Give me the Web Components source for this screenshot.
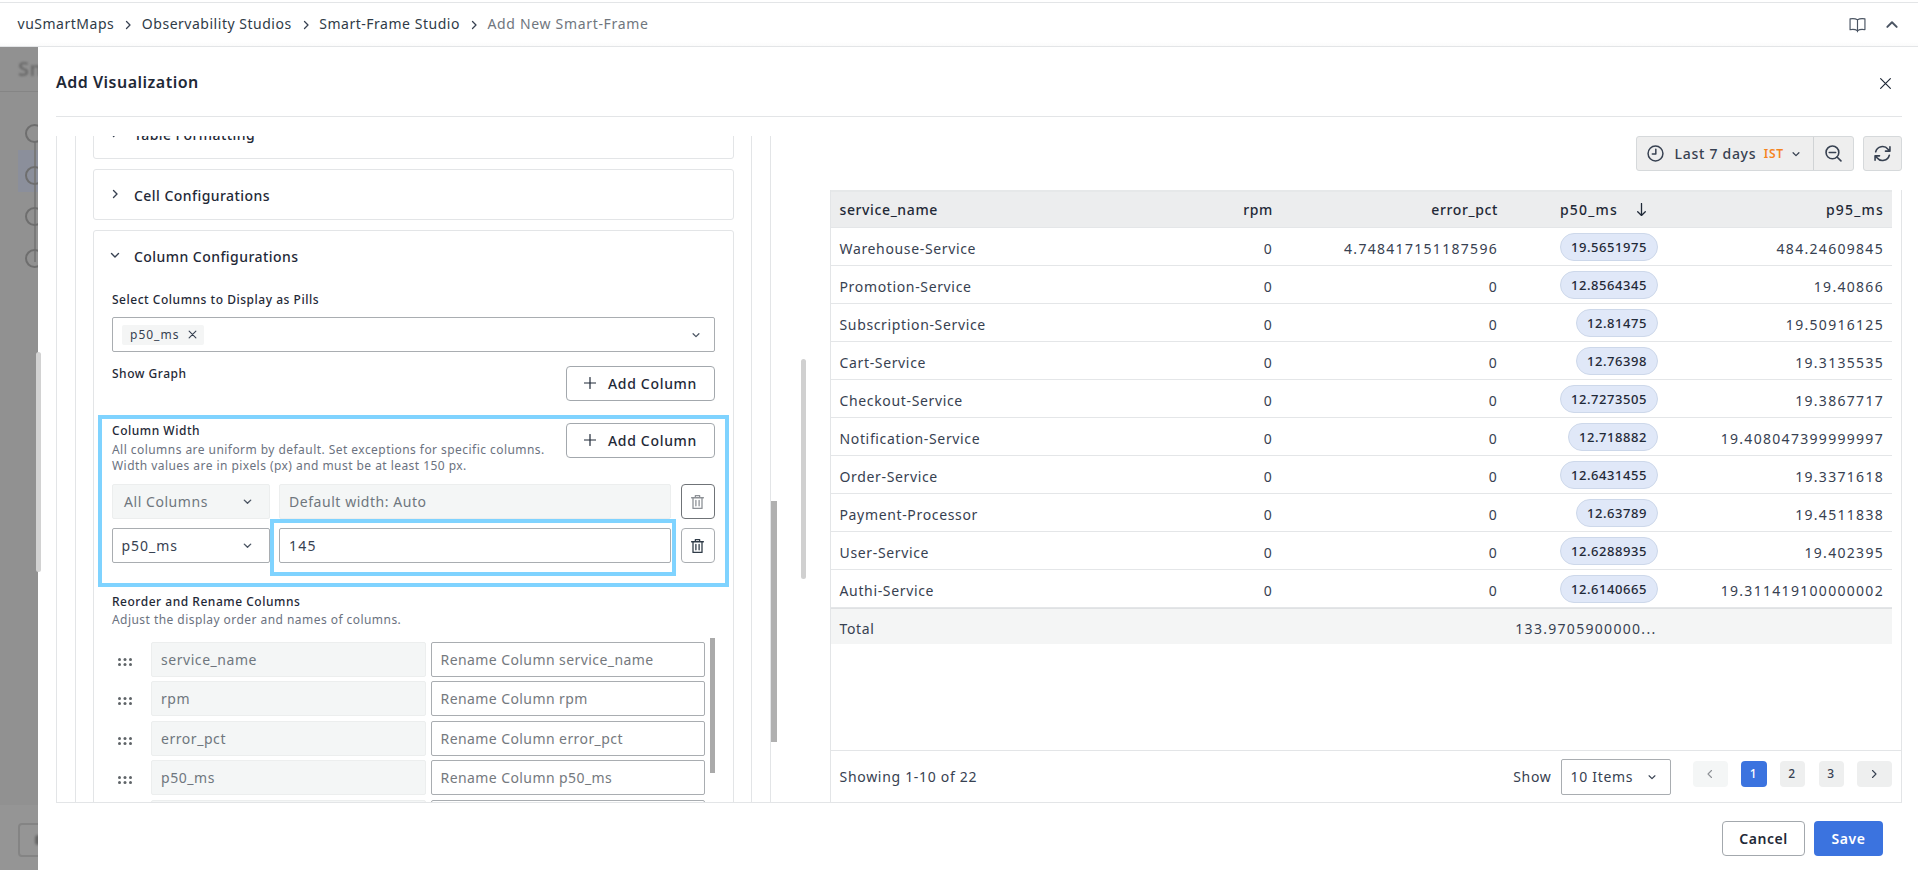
<!doctype html>
<html><head><meta charset="utf-8"><style>
html,body{margin:0;padding:0;background:#fff}
body{font-family:"Noto Sans","Open Sans",sans-serif;font-size:14px;letter-spacing:.5px;color:#1f2937}
</style></head><body>
<x-app>
  <x-topbar slot="top">
    <x-crumb>vuSmartMaps</x-crumb><x-crumb>Observability Studios</x-crumb><x-crumb>Smart-Frame Studio</x-crumb><x-crumb last>Add New Smart-Frame</x-crumb>
  </x-topbar>
  <x-backdrop slot="back"></x-backdrop>
  <x-modal slot="modal" heading="Add Visualization">
    <x-left-pane slot="left">
      <x-accordion heading="Table Formatting"></x-accordion>
      <x-accordion heading="Cell Configurations"></x-accordion>
      <x-accordion heading="Column Configurations" open>
        <x-column-config></x-column-config>
      </x-accordion>
    </x-left-pane>
    <x-right-pane slot="right"></x-right-pane>
    <x-btn slot="foot" kind="outline">Cancel</x-btn>
    <x-btn slot="foot" kind="primary">Save</x-btn>
  </x-modal>
</x-app>
<script>
const ICONS={
 chevR:'<path d="M4.5 2.5 8 6 4.5 9.5"/>',
 chevD:'<path d="M2.5 4.5 6 8l3.5-3.5"/>',
 chevU:'<path d="M2 8.5 6 4.5l4 4"/>',
 chevL:'<path d="M7.5 2.5 4 6l3.5 3.5"/>',
 close:'<path d="M1.5 1.5l9 9M10.5 1.5l-9 9"/>',
 plus:'<path d="M6 .5v11M.5 6h11"/>',
 book:'<path d="M8 3.6C6.4 2.6 3.6 2.2 1 2.7v10.2c2.6-.5 5.4-.1 7 .9 1.6-1 4.4-1.4 7-.9V2.7C12.4 2.2 9.6 2.6 8 3.6zM8 3.6v11.2"/>',
 clock:'<circle cx="8" cy="8" r="7"/><path d="M8.3 4v4.4H5"/>',
 zoom:'<circle cx="7" cy="7" r="6"/><path d="M4 7h6M11.3 11.3 15 15"/>',
 refresh:'<path d="M1.6 6.4A6.6 6.6 0 0 1 13.2 4l1.6 1.6M15 1.6v4.2h-4.2M14.4 9.6A6.6 6.6 0 0 1 2.8 12l-1.6-1.6M1 14.4v-4.2h4.2"/>',
 trash:'<path d="M1.5 3.5h11M5 3.5V1.5h4v2M2.8 3.5v10h8.4v-10M5.5 6v5M8.5 6v5"/>',
 arrowD:'<path d="M6 .5v11M2.5 8 6 11.5 9.5 8"/>'
};
function define(name,css,html,init){
  customElements.define(name,class extends HTMLElement{
    constructor(){super();const r=this.attachShadow({mode:'open'});
      r.innerHTML='<style>'+css+'</style>'+(typeof html==='function'?html(this):html);
      if(init)init(this,r);}
  });
}
define('x-icon',':host{display:inline-flex;flex:none;align-items:center;justify-content:center}svg{display:block;fill:none;stroke:currentColor;stroke-linecap:round;stroke-linejoin:round}',
 el=>{const n=el.getAttribute('name'),s=el.getAttribute('size')||12,w=el.getAttribute('w')||1.3,vb=(n==='book'||n==='clock'||n==='zoom'||n==='refresh')?16:n==='trash'?14:12;
 return `<svg width="${s}" height="${s}" viewBox="0 0 ${vb} ${vb}" stroke-width="${w}">${ICONS[n]}</svg>`});

define('x-app',':host{display:block;position:relative;width:1918px;height:870px;overflow:hidden}.row{display:flex;height:823px}.sb{position:absolute;left:36px;top:352px;width:5px;height:220px;border-radius:2.5px;background:#d2d2d2}',
 '<slot name="top"></slot><div class="row"><slot name="back"></slot><slot name="modal"></slot></div><div class="sb"></div>');

define('x-topbar',`:host{display:flex;align-items:center;box-sizing:border-box;height:47px;margin:0;padding:0 19px 0 17.5px;border-top:2px solid #fff;border-bottom:1px solid #e3e5e7;box-shadow:inset 0 1px 0 #e3e5e7;background:linear-gradient(#fff 90%,#fbfbfb)}
 .crumbs{display:flex;align-items:center;flex:1}.ic{display:flex;align-items:center;gap:19.5px;color:#4b5563}`,
 '<div class="crumbs"><slot></slot></div><div class="ic"><x-icon name="book" size="17" w="1.1"></x-icon><x-icon name="chevU" size="14" w="1.7"></x-icon></div>');

define('x-crumb',`:host{display:inline-flex;align-items:center;font-size:14px;letter-spacing:.52px;color:#2f3b47;line-height:20px}
 :host([last]){color:#6f767e;letter-spacing:.68px}x-icon{margin:2px 7.5px 0 8px;color:#374151}:host([last]) x-icon{display:none}`,
 '<slot></slot><x-icon name="chevR" size="12" w="1.3"></x-icon>');

define('x-backdrop',`:host{display:block;position:relative;flex:none;width:38px;height:823px;background:#919191;overflow:hidden}
 .t{position:absolute;left:18px;top:10px;font-size:20px;font-weight:600;color:#6a6a6a;filter:blur(.8px);line-height:24px}
 .l{position:absolute;left:0;right:0;top:44px;height:1px;background:#858585}
 .hl{position:absolute;left:18px;right:0;top:103px;height:42px;background:#8b8f9b}
 .c{position:absolute;left:25px;width:15px;height:15px;border:2px solid #6e6e6e;border-radius:50%;filter:blur(.5px)}
 .v{position:absolute;left:34px;width:2px;background:#7a7a7a;top:95px;height:120px;filter:blur(.5px)}
 .b{position:absolute;left:18px;top:776px;width:40px;height:34px;box-sizing:border-box;border:2px solid #848484;border-radius:4px;filter:blur(.6px)}
 .f{position:absolute;left:0;right:0;top:758px;bottom:0;background:#959595}
 .b2{position:absolute;left:35px;top:788px;width:6px;height:10px;border-radius:3px;background:#666;filter:blur(.8px)}`,
 '<div class="f"></div><div class="t">Sm</div><div class="l"></div><div class="hl"></div><div class="v"></div><div class="c" style="top:77px"></div><div class="c" style="top:119px"></div><div class="c" style="top:160px"></div><div class="c" style="top:202px"></div><div class="b"></div><div class="b2"></div>');

define('x-modal',`:host{display:flex;flex-direction:column;flex:1;min-width:0;background:#fff;padding:0 16px 0 18px}
 header{display:flex;align-items:center;justify-content:space-between;height:70px;flex:none;border-bottom:1px solid #e3e5e7;box-sizing:border-box;padding-top:1px}
 h2{margin:0;font-size:16px;font-weight:600;letter-spacing:.5px;color:#1f2937}
 header x-icon{margin:2px 10px 0 0;color:#1f2937}
 .body{display:flex;height:686px;flex:none;box-sizing:border-box;border-bottom:1px solid #e3e5e7}
 footer{display:flex;justify-content:flex-end;gap:9px;padding:18px 19px 0 0}`,
 el=>`<header><h2>${el.getAttribute('heading')}</h2><x-icon name="close" size="13" w="1.1"></x-icon></header>
 <div class="body"><slot name="left"></slot><slot name="right"></slot></div><footer><slot name="foot"></slot></footer>`);

define('x-left-pane',`:host{display:block;position:relative;flex:none;width:715px;box-sizing:border-box;margin-top:19px;height:666px;border:solid #e3e5e7;border-width:0 1px;padding:0 18px}
 .in{box-sizing:border-box;height:666px;overflow:hidden;border:solid #e3e5e7;border-width:0 1px;padding:0 17px}
 .c{display:flex;flex-direction:column;gap:10px;margin-top:-28px}`,
 '<div class="in"><div class="c"><slot></slot></div></div>');

define('x-accordion',`:host{display:block;border:1px solid #e3e5e7;border-radius:3px;background:#fff;padding:16.5px 18.5px 14.5px 18px}
 .h{display:flex;align-items:flex-start;height:18px;font-weight:500;font-size:14px;letter-spacing:.45px;line-height:18px;color:#1f2937}
 x-icon{margin:1px 13px 0 -3px;color:#374151}`,
 el=>`<div class="h"><x-icon name="${el.hasAttribute('open')?'chevD':'chevR'}" size="12" w="1.4"></x-icon><span>${el.getAttribute('heading')}</span></div><slot></slot>`);

define('x-btn',`:host{display:inline-flex;align-items:center;justify-content:center;box-sizing:border-box;height:35px;border-radius:4px;font-size:14px;font-weight:600;letter-spacing:.55px;cursor:pointer}
 :host([kind=outline]){width:83px;border:1px solid #a3a8ad;background:#fff;color:#1f2937}
 :host([kind=primary]){width:69px;background:#3b73df;color:#fff}
 :host([kind=add]){width:148.5px;border:1px solid #a3a8ad;background:#fff;color:#1f2937;font-weight:500;letter-spacing:.68px;gap:12px;flex:none;justify-content:flex-end;padding-right:16.5px}`,
 el=>(el.getAttribute('kind')==='add'?'<x-icon name="plus" size="12" w="1.2"></x-icon>':'')+'<slot></slot>');

define('x-field',`:host{display:flex;align-items:center;box-sizing:border-box;height:35px;min-width:0;border:1px solid #a9adb1;border-radius:2px;background:#fff;padding:0 9px;color:#374151;font-size:14px;letter-spacing:.55px}
 :host([disabled]){background:#f4f6f6;border-color:#eceeee;color:#6f767e}
 :host([ph]){color:#75797e;letter-spacing:.42px}
 :host([wide]){letter-spacing:.95px}
 :host([digits]){letter-spacing:1.3px}
 .t{flex:1;white-space:nowrap}x-icon{color:#4b5563;margin-right:7px}`,
 el=>'<span class="t"><slot></slot></span>'+(el.hasAttribute('select')?'<x-icon name="chevD" size="11" w="1.5"></x-icon>':''));

define('x-trash',`:host{display:flex;align-items:center;justify-content:center;flex:none;box-sizing:border-box;width:34px;height:35px;border:1px solid #a9adb1;border-radius:4px;color:#2f3b47}
 :host([off]){border-color:#6f7377;color:#8d9196}`,'<x-icon name="trash" size="15" w="1.2"></x-icon>');

define('x-chip',`:host{display:inline-flex;align-items:center;box-sizing:border-box;width:82px;height:20px;padding-left:8px;border-radius:2px;background:#f4f5f5;font-size:12px;letter-spacing:1px;color:#374151;gap:9px}`,
 '<slot></slot><x-icon name="close" size="9" w="1.5"></x-icon>');

define('x-column-config',`:host{display:block;font-size:12px}
 .lab{font-size:12px;font-weight:500;letter-spacing:.52px;line-height:16px;color:#1f2937}
 .desc{font-size:12px;line-height:16px;letter-spacing:.45px;color:#6b7280}
 .sel{display:flex;align-items:center;box-sizing:border-box;height:35px;border:1px solid #a9adb1;border-radius:2px;margin-top:9px;padding:0 13px 0 9px;justify-content:space-between}
 .sel x-icon{color:#4b5563}
 .graph{display:flex;justify-content:space-between;margin-top:13px;padding-top:.7px}
 .blue{box-sizing:border-box;margin:14px -14px 0;border:4px solid #7fd3ff;padding:4px 10px 20px}
 .head{display:flex;justify-content:space-between;height:52px}
 .head .lab{padding-top:.7px;margin-bottom:3px}
 .r{display:flex;margin-top:9px;height:35px}
 .r x-field:first-child{width:158px;flex:none}
 .r x-field:nth-child(2){flex:1;margin-left:9px}
 .r x-trash{margin-left:10px}
 .r .a{flex:1;margin-left:9px;position:relative;display:flex}
 .r .a x-field{flex:1;margin:0}
 .r .a i{position:absolute;left:-9px;right:-5.5px;top:-9px;bottom:-13px;border:4px solid #7fd3ff;pointer-events:none}
 .re{margin-top:7.7px}
 .re .desc{margin-top:2px}
 .list{position:relative;margin-top:13.3px;display:flex;flex-direction:column;gap:4.5px}
 .i{display:flex;align-items:center;width:593px}
 .i svg{flex:none;margin:5px 19px 0 6px;width:14px;height:8px;fill:#5f6468}
 .i x-field{width:275px;flex:none}.i x-field+x-field{margin-left:4.5px;width:274.5px}
 .bar{position:absolute;left:597.5px;top:-4px;width:5.5px;height:135px;background:#aaa}`,
 ()=>{const dots='<svg viewBox="0 0 14 8"><circle cx="1.5" cy="1.5" r="1.5"/><circle cx="7" cy="1.5" r="1.5"/><circle cx="12.5" cy="1.5" r="1.5"/><circle cx="1.5" cy="6.5" r="1.5"/><circle cx="7" cy="6.5" r="1.5"/><circle cx="12.5" cy="6.5" r="1.5"/></svg>';
 const rows=['service_name','rpm','error_pct','p50_ms','p95_ms'].map(n=>`<div class="i">${dots}<x-field disabled>${n}</x-field><x-field ph>Rename Column ${n}</x-field></div>`).join('');
 return `<div class="lab" style="margin-top:26.5px">Select Columns to Display as Pills</div>
 <div class="sel"><x-chip>p50_ms</x-chip><x-icon name="chevD" size="10" w="1.5"></x-icon></div>
 <div class="graph"><div class="lab" style="padding-top:.5px">Show Graph</div><x-btn kind="add">Add Column</x-btn></div>
 <div class="blue"><div class="head"><div><div class="lab">Column Width</div><div class="desc">All columns are uniform by default. Set exceptions for specific columns.<br>Width values are in pixels (px) and must be at least 150 px.</div></div><x-btn kind="add">Add Column</x-btn></div>
 <div class="r" style="margin-top:9px"><x-field disabled select style="padding-left:11px">All Columns</x-field><x-field disabled>Default width: Auto</x-field><x-trash off></x-trash></div>
 <div class="r"><x-field select wide style="padding-left:8.5px">p50_ms</x-field><div class="a"><x-field digits>145</x-field><i></i></div><x-trash></x-trash></div></div>
 <div class="re"><div class="lab">Reorder and Rename Columns</div><div class="desc">Adjust the display order and names of columns.</div></div>
 <div class="list">${rows}<div class="bar"></div></div>`});

define('x-right-pane',`:host{display:block;position:relative;flex:1;min-width:0;padding-top:19px;box-sizing:border-box}
 .tools{display:flex;justify-content:flex-end;gap:9px;height:35px;margin-bottom:19px}
 .grp{display:flex;box-sizing:border-box;height:35px;border:1px solid #d6d9db;border-radius:3px;background:#eeeeee;color:#374151}
 .time{display:flex;align-items:center;width:177px;box-sizing:border-box;padding-left:9.5px;font-size:14px;font-weight:500;letter-spacing:.72px;border-right:1px solid #d0d3d5}
 .time b{font-weight:600;font-size:12px;color:#f5841f;margin:0 7px 0 7.5px;letter-spacing:.7px}
 .time span{margin-left:11px}
 .sq{display:flex;align-items:center;justify-content:center;width:39px}
 .sb{position:absolute;left:30px;top:242px;width:5px;height:220px;border-radius:2.5px;background:#d0d0d0}
 .sb2{position:absolute;left:0;top:384px;width:6px;height:241px;background:#b0b0b0}`,
 `<div class="tools"><div class="grp"><div class="time"><x-icon name="clock" size="17" w="1.4"></x-icon><span>Last 7 days</span><b>IST</b><x-icon name="chevD" size="10" w="1.5"></x-icon></div><div class="sq"><x-icon name="zoom" size="17" w="1.5"></x-icon></div></div><div class="grp"><div class="sq" style="width:37px"><x-icon name="refresh" size="17" w="1.5"></x-icon></div></div></div>
 <x-table></x-table><div class="sb"></div><div class="sb2"></div>`);

const DATA=[['Warehouse-Service','0','4.748417151187596','19.5651975','484.24609845'],['Promotion-Service','0','0','12.8564345','19.40866'],['Subscription-Service','0','0','12.81475','19.50916125'],['Cart-Service','0','0','12.76398','19.3135535'],['Checkout-Service','0','0','12.7273505','19.3867717'],['Notification-Service','0','0','12.718882','19.408047399999997'],['Order-Service','0','0','12.6431455','19.3371618'],['Payment-Processor','0','0','12.63789','19.4511838'],['User-Service','0','0','12.6288935','19.402395'],['Authi-Service','0','0','12.6140665','19.311419100000002']];
define('x-table',`:host{display:flex;flex-direction:column;box-sizing:border-box;margin-left:59px;height:612px;border:solid #e3e5e7;border-width:0 1px 0 1px;color:#374151}
 .wrap{flex:1;width:1061px}
 .row{display:grid;grid-template-columns:225px 225px 225px 161px 225px;align-items:center;box-sizing:border-box;height:38px;border-bottom:1px solid #e4e6e8;font-size:14px;letter-spacing:.65px}
 .row>div{padding:3px 9px 0;text-align:right;white-space:nowrap;letter-spacing:1.3px;margin-right:-1px}
 .row>div:first-child{text-align:left;letter-spacing:.65px;margin:0;padding-left:8.5px}
 .row>div.pc{padding-top:0;margin-right:0}
 .hd{background:#ecedee;border-top:2px solid #e6e8e9;font-weight:500;color:#1f2937;height:38px}
 .hd>div,.hd>div:first-child{letter-spacing:.62px;padding-top:0}
 .hd>div.w{letter-spacing:1.2px}
 .hd .p{display:flex;justify-content:flex-end;align-items:center;gap:17px;padding-right:20px}
 .tot{background:#f4f5f5;border-top:1px solid #dfe1e3;border-bottom:0;height:36px;color:#374151}
 .tot>div.v{padding-right:11.5px}
 .pill{display:inline-flex;align-items:center;box-sizing:border-box;height:28px;padding:0 10px;border:1px solid #cdd8ea;border-radius:14px;background:#e0e8f8;font-size:13px;font-weight:500;letter-spacing:.55px;color:#1f2937}
 x-pager{flex:none}`,
 ()=>`<div class="wrap"><div class="row hd"><div>service_name</div><div>rpm</div><div>error_pct</div><div class="p w"><span>p50_ms</span><x-icon name="arrowD" size="13" w="1.2"></x-icon></div><div class="w">p95_ms</div></div>
 ${DATA.map(d=>`<div class="row"><div>${d[0]}</div><div>${d[1]}</div><div>${d[2]}</div><div class="pc"><span class="pill">${d[3]}</span></div><div>${d[4]}</div></div>`).join('')}
 <div class="row tot"><div>Total</div><div></div><div></div><div class="v">133.9705900000...</div><div></div></div></div><x-pager></x-pager>`);

define('x-pager',`:host{display:flex;align-items:center;box-sizing:border-box;height:52px;border-top:1px solid #e3e5e7;padding:0 9.5px 0 8.5px;font-size:14px;letter-spacing:.7px;color:#374151}
 .s{flex:1}.sh{margin-right:9px}
 .sel{display:flex;align-items:center;justify-content:space-between;box-sizing:border-box;width:110px;height:36px;border:1px solid #a9adb1;border-radius:2px;padding:0 13px 0 9px;margin-right:22px}
 .b{display:flex;align-items:center;justify-content:center;box-sizing:border-box;height:26px;border-radius:4px;background:#eeefef;font-size:12px;font-weight:500;width:25px;margin:-6px 0 0 13px;color:#374151}
 .w{width:35px}.on{background:#3b73df;color:#fff;width:26px}.off{background:#f4f6f6;color:#8d9196;margin-left:0}`,
 `<span class="s">Showing 1-10 of 22</span><span class="sh">Show</span><div class="sel"><span>10 Items</span><x-icon name="chevD" size="10" w="1.4"></x-icon></div>
 <div class="b w off"><x-icon name="chevL" size="12" w="1.1"></x-icon></div><div class="b on">1</div><div class="b">2</div><div class="b" style="margin-left:14px">3</div><div class="b w"><x-icon name="chevR" size="12" w="1.1"></x-icon></div>`);
</script>
</body></html>
